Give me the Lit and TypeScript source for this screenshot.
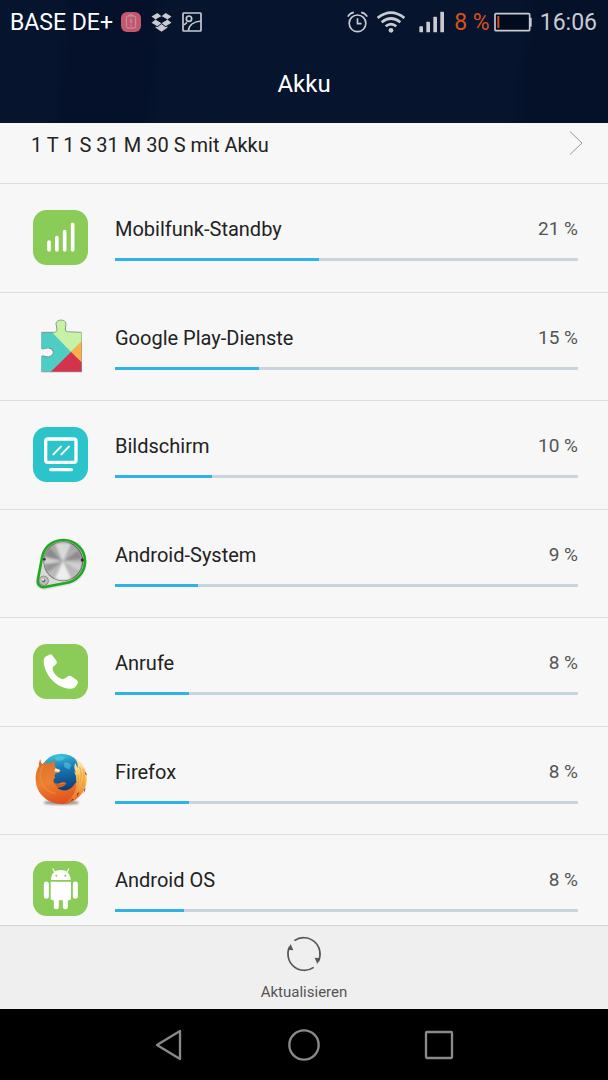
import { LitElement, html, svg, css } from "lit";
import type { TemplateResult } from "lit";
import { customElement, property } from "lit/decorators.js";

interface Consumer {
  name: string;
  percent: number;
  level: number;
  icon: TemplateResult;
}

const cellular = html`<svg viewBox="39 45 165 165" aria-hidden="true">
  <rect x="39" y="45" width="165" height="165" rx="41" fill="#8bcb57" />
  <path d="M87 141v24M110.500 128v37M134 110v55M158 88v77" stroke="#fff" stroke-width="11" stroke-linecap="round" />
</svg>`;

const puzzle = html`<svg viewBox="39 41 165 165" aria-hidden="true">
  <defs>
    <clipPath id="piece">
      <path d="M64 81H104Q112 79 111 71L108 57C106 40 140 40 138 57L136 71Q135 79 143 79L185 81V199H64V153C72 148 74 156 86 154C104 151 104 130 88 128C76 126 72 133 64 129Z" />
    </clipPath>
  </defs>
  <path d="M64 83H104Q112 81 111 73L108 59C106 42 140 42 138 59L136 73Q135 81 143 81L186 83V201H64V155C72 150 74 158 86 156C104 153 104 132 88 130C76 128 72 135 64 131Z" fill="#77807a" opacity=".8" />
  <g clip-path="url(#piece)">
    <path d="M60 78H98L153 140 92 200H60Z" fill="#4fcdc4" />
    <path d="M96 81V40H186V108L153 140Z" fill="#c5f2a5" />
    <path d="M153 140 186 107V172Z" fill="#fbb04d" />
    <path d="M92 200 153 140 186 172V200Z" fill="#d3344b" />
  </g>
  <path d="M64 81H104Q112 79 111 71L108 57C106 40 140 40 138 57L136 71Q135 79 143 79L185 81M64 153C72 148 74 156 86 154C104 151 104 130 88 128" fill="none" stroke="#5f7d6c" stroke-width="3" opacity=".65" />
</svg>`;

const display = html`<svg viewBox="39 36 165 165" aria-hidden="true">
  <rect x="39" y="36" width="165" height="165" rx="41" fill="#2cc4cb" />
  <rect x="77" y="72" width="91" height="70" rx="7" fill="none" stroke="#fff" stroke-width="10" />
  <path d="M92 164h62" stroke="#fff" stroke-width="10" stroke-linecap="round" />
  <path d="M100 118 123 95M124 118 147 95" stroke="#fff" stroke-width="6" stroke-linecap="round" />
</svg>`;

const wedge = (from: number, to: number, fill: string, opacity: number) => {
  const point = (deg: number) => {
    const t = (deg * Math.PI) / 180;
    return `${129 + 56 * Math.cos(t)} ${108 + 56 * Math.sin(t)}`;
  };
  return svg`<path d="M129 108L${point(from)}A56 56 0 0 1 ${point(to)}Z" fill=${fill} opacity=${opacity} />`;
};

const system = html`<svg viewBox="39 32 165 165" aria-hidden="true">
  <defs>
    <linearGradient id="steel" x1="0" y1="0" x2="0" y2="1">
      <stop offset="0" stop-color="#a4a4a4" />
      <stop offset=".5" stop-color="#b4b4b4" />
      <stop offset="1" stop-color="#bdbdbd" />
    </linearGradient>
    <filter id="soft"><feGaussianBlur stdDeviation="3" /></filter>
  </defs>
  <path d="M67 97C76 60 108 47 133 48C172 50 198 81 197 113C196 149 168 173 139 177L76 190C57 191 49 180 52 164Z" fill="#888" opacity=".6" filter="url(#soft)" />
  <path d="M67 93C76 56 108 43 133 44C172 46 196 77 195 109C194 145 166 169 137 173L74 185C59 187 51 177 54 161Z" fill="#dadada" stroke="#1cab1c" stroke-width="8" stroke-linejoin="round" />
  <circle cx="130" cy="108" r="60" fill="#6a6a6a" />
  <circle cx="129" cy="108" r="57" fill="url(#steel)" />
  <g filter="url(#soft)">
    ${wedge(-115, -65, "#fff", 0.55)}
    ${wedge(65, 115, "#fff", 0.75)}
    ${wedge(-35, -8, "#555", 0.4)}
    ${wedge(145, 172, "#555", 0.35)}
    ${wedge(-165, -135, "#555", 0.4)}
    ${wedge(5, 30, "#fff", 0.35)}
    ${wedge(172, 190, "#fff", 0.4)}
  </g>
  <circle cx="71" cy="166" r="15" fill="#777" />
  <circle cx="71" cy="166" r="13" fill="#bcbcbc" />
  <circle cx="71" cy="166" r="5" fill="#666" />
  <circle cx="69" cy="163" r="3" fill="#fff" />
  <circle cx="73" cy="102" r="4" fill="#333" />
  <circle cx="187" cy="104" r="5" fill="#333" />
</svg>`;

const phone = html`<svg viewBox="39 27 165 165" aria-hidden="true">
  <rect x="39" y="27" width="165" height="165" rx="41" fill="#8bcb57" />
  <path d="M75 66 87 59Q93 56 97 61L110 79Q112 84 108 88L98 97C96 111 111 129 129 133L138 128 145 123Q149 121 154 124L171 136Q176 140 173 146L166 156Q161 162 149 161C112 160 75 124 71 81Q70 71 75 66Z" fill="#fff" />
</svg>`;

const firefox = html`<svg viewBox="39 38 165 165" aria-hidden="true">
  <defs>
    <linearGradient id="globe" x1=".4" y1="0" x2=".55" y2="1">
      <stop offset="0" stop-color="#3cc5dd" />
      <stop offset=".35" stop-color="#1877b8" />
      <stop offset="1" stop-color="#0a2e63" />
    </linearGradient>
    <linearGradient id="fur" x1=".2" y1="0" x2=".5" y2="1">
      <stop offset="0" stop-color="#d9702e" />
      <stop offset=".5" stop-color="#ee8030" />
      <stop offset="1" stop-color="#df4f1d" />
    </linearGradient>
    <linearGradient id="tail" x1="0" y1="0" x2="0" y2="1">
      <stop offset="0" stop-color="#fff0bf" />
      <stop offset=".45" stop-color="#f9bf56" />
      <stop offset="1" stop-color="#e96524" />
    </linearGradient>
    <filter id="shade"><feGaussianBlur stdDeviation="3" /></filter>
  </defs>
  <ellipse cx="124" cy="187" rx="53" ry="7" fill="#555" opacity=".6" filter="url(#shade)" />
  <circle cx="124" cy="104" r="64" fill="url(#globe)" />
  <path d="M103 53Q119 45 138 50L128 60 112 62ZM132 67Q145 62 154 75L148 88 133 81Z" fill="#6bdce0" opacity=".45" />
  <path d="M61 57C62 64 63 68 67 71Q79 64 93 69Q97 63 106 61Q101 71 107 82L120 88Q123 92 118 96L106 100Q101 108 106 113C98 116 99 127 106 129C119 134 125 120 139 128C134 138 122 142 111 142C129 157 154 151 165 129L196 121C191 165 161 191 125 191C81 191 47 157 47 117Q46 94 57 77Q55 66 61 57Z" fill="url(#fur)" />
  <path d="M165 53C186 63 203 91 200 123C196 161 167 187 131 190C153 178 170 157 169 126Q170 106 162 93L168 97Q159 81 166 68L173 83Q175 69 165 53Z" fill="url(#tail)" />
  <path d="M179 80Q188 101 180 126M174 103Q180 132 163 158M189 85Q196 112 187 135" fill="none" stroke="#e9832c" stroke-width="4" opacity=".5" />
  <path d="M196 93l5 12-5-3M193 146l4-2-6 16M178 156l-8 15 2-12M162 176l-8 7 1-6" fill="#7b2c17" />
  <path d="M106 84 120 89 117 95 103 93Z" fill="#fff1d1" />
  <path d="M70 75Q57 94 62 118Q70 153 107 160" fill="none" stroke="#f5a04b" stroke-width="5" opacity=".35" />
  <path d="M101 127Q120 137 139 128Q132 138 113 141Z" fill="#c54b17" opacity=".65" />
</svg>`;

const android = html`<svg viewBox="39 34 165 165" aria-hidden="true">
  <rect x="39" y="34" width="165" height="165" rx="41" fill="#8bcb57" />
  <path d="M93 91C93 70 106 61 122 61S151 70 152 91ZM92 96H153V146Q153 152 147 152H98Q92 152 92 146Z" fill="#fff" />
  <path d="M79 103v37M166 103v37M109 150v21M136 150v21" stroke="#fff" stroke-width="15" stroke-linecap="round" />
  <path d="M104 67l-5-9M141 67l5-9" stroke="#fff" stroke-width="4" stroke-linecap="round" />
  <circle cx="109" cy="78" r="3" fill="#8bcb57" />
  <circle cx="136" cy="78" r="3" fill="#8bcb57" />
</svg>`;

const consumers: Consumer[] = [
  { name: "Mobilfunk-Standby", percent: 21, level: 44, icon: cellular },
  { name: "Google Play-Dienste", percent: 15, level: 31, icon: puzzle },
  { name: "Bildschirm", percent: 10, level: 21, icon: display },
  { name: "Android-System", percent: 9, level: 18, icon: system },
  { name: "Anrufe", percent: 8, level: 16, icon: phone },
  { name: "Firefox", percent: 8, level: 16, icon: firefox },
  { name: "Android OS", percent: 8, level: 15, icon: android },
];

@customElement("status-bar")
export class StatusBar extends LitElement {
  static styles = css`
    :host {
      display: flex;
      justify-content: space-between;
      align-items: center;
      height: 44px;
      padding: 0 11px 0 10px;
      font-size: 23px;
      color: #c9cbd0;
    }
    .group {
      display: flex;
      align-items: center;
    }
    .carrier {
      color: #fff;
      margin-right: 8px;
    }
    .notices {
      display: flex;
      align-items: center;
      gap: 10px;
    }
    .alarm {
      margin-right: 9px;
    }
    .wifi {
      margin-right: 14px;
    }
    .signal {
      margin-right: 10px;
    }
    .charge {
      color: #d9501e;
      margin-right: 4px;
    }
    .battery {
      margin-right: 8px;
    }
    svg {
      display: block;
    }
  `;

  render() {
    return html`
      <div class="group">
        <span class="carrier">BASE DE+</span>
        <span class="notices">
          <svg width="20" height="20" viewBox="0 0 60 60" aria-hidden="true">
            <rect width="60" height="60" rx="18" fill="#c4566d" />
            <path d="M25 12V8h10v4M21 12h18q5 0 5 5v26q0 5-5 5H21q-5 0-5-5V17q0-5 5-5Z" fill="none" stroke="#c79aa6" stroke-width="3" />
            <path d="M30 20v14M30 38v4" stroke="#c79aa6" stroke-width="4" />
          </svg>
          <svg width="21" height="20" viewBox="0 0 60 58" aria-hidden="true">
            <path d="M18 3 30 12 13 22 1 13ZM42 3 59 13 47 22 30 12ZM13 22 30 32 18 41 1 31ZM47 22 59 31 42 41 30 32Z" fill="#c9cbd0" />
            <path d="M13 22 30 12 47 22 30 32Z" fill="#06122c" />
            <path d="M13 41 18 44 30 35 42 44 47 41V46L30 57 13 46Z" fill="#c9cbd0" />
          </svg>
          <svg width="20" height="20" viewBox="0 0 60 60" fill="none" stroke="#c9cbd0" stroke-width="5" aria-hidden="true">
            <rect x="3" y="3" width="54" height="54" rx="2" />
            <circle cx="21" cy="20" r="8" />
            <path d="M15 31 6 39M19 56C21 39 36 28 58 27" />
          </svg>
        </span>
      </div>
      <div class="group">
        <svg class="alarm" width="21" height="22" viewBox="0 0 62 66" fill="none" stroke="#c9cbd0" stroke-width="5" aria-hidden="true">
          <circle cx="31" cy="37" r="25" />
          <path d="M31 22v16h12" />
          <path d="M2 17Q8 6 20 4M60 17Q54 6 42 4" />
        </svg>
        <svg class="wifi" width="28" height="22" viewBox="0 0 84 66" fill="none" stroke="#c9cbd0" stroke-width="8" aria-hidden="true">
          <path d="M2 21Q42-11 82 21M14 34Q42 11 70 34M26 46Q42 33 58 46" />
          <circle cx="42" cy="58" r="7" fill="#c9cbd0" stroke="none" />
        </svg>
        <svg class="signal" width="25" height="22" viewBox="0 0 75 66" fill="#c9cbd0" aria-hidden="true">
          <rect x="1" y="46" width="11" height="18" rx="2" />
          <rect x="22" y="32" width="11" height="32" rx="2" />
          <rect x="43" y="17" width="11" height="47" rx="2" />
          <rect x="64" y="2" width="11" height="62" rx="2" />
        </svg>
        <span class="charge">8 %</span>
        <svg class="battery" width="38" height="20" viewBox="0 0 114 60" aria-hidden="true">
          <rect x="3" y="5" width="104" height="51" rx="3" fill="#020a1e" stroke="#c9cbd0" stroke-width="5" />
          <rect x="108" y="17" width="5" height="27" rx="1" fill="#c9cbd0" />
          <rect x="10" y="12" width="6" height="36" fill="#d9501e" />
        </svg>
        <time>16:06</time>
      </div>
    `;
  }
}

@customElement("usage-row")
export class UsageRow extends LitElement {
  @property({ attribute: false }) item!: Consumer;

  static styles = css`
    :host {
      display: flex;
      gap: 27px;
      padding: 26px 30px 0 33px;
    }
    .icon {
      flex: none;
      width: 55px;
      height: 55px;
    }
    .icon svg {
      display: block;
      width: 100%;
      height: 100%;
      overflow: visible;
    }
    .body {
      flex: 1;
      padding-top: 5px;
    }
    .line {
      display: flex;
      justify-content: space-between;
      align-items: center;
      line-height: 28px;
    }
    .name {
      font-size: 20px;
      color: #222;
    }
    .percent {
      font-size: 19px;
      color: #555;
    }
    .meter {
      display: block;
      appearance: none;
      width: 100%;
      height: 3px;
      margin-top: 15px;
      border: 0;
      background: #c9d5dd;
    }
    .meter::-webkit-progress-bar {
      background: #c9d5dd;
    }
    .meter::-webkit-progress-value {
      background: #2fb2e6;
    }
  `;

  render() {
    const { name, percent, level, icon } = this.item;
    return html`
      <div class="icon">${icon}</div>
      <div class="body">
        <div class="line">
          <label class="name" for="meter">${name}</label>
          <span class="percent">${percent} %</span>
        </div>
        <progress class="meter" id="meter" max="100" value=${level}></progress>
      </div>
    `;
  }
}

@customElement("app-root")
export class AppRoot extends LitElement {
  static styles = css`
    :host {
      display: flex;
      flex-direction: column;
      height: 100vh;
      overflow: hidden;
      font-family: Roboto, "Noto Sans", sans-serif;
      background: #f7f7f7;
      color: #222;
    }
    .top {
      flex: none;
      background: linear-gradient(95deg, #06142e 10%, #05112a 12% 25%, #06142e 27% 84%, #051129 87%);
    }
    .title {
      margin: 0;
      padding: 26px 0 25px;
      font-size: 24px;
      line-height: 28px;
      font-weight: 400;
      text-align: center;
      color: #fff;
    }
    .content {
      flex: 1;
      min-height: 0;
      overflow-y: auto;
      scrollbar-width: none;
    }
    .history {
      display: flex;
      justify-content: space-between;
      box-sizing: border-box;
      height: 61px;
      padding: 8px 25px 0 31px;
      border-bottom: 1px solid #dedede;
      font-size: 20px;
      line-height: 28px;
      color: inherit;
      text-decoration: none;
    }
    .list {
      display: grid;
      grid-template-rows: repeat(7, 1fr);
      height: 760px;
      margin: 0;
      padding: 0;
      list-style: none;
    }
    .entry {
      border-bottom: 1px solid #dedede;
    }
    .toolbar {
      flex: none;
      display: flex;
      justify-content: center;
      border-top: 1px solid #d6d6d6;
      background: #efefef;
    }
    .refresh {
      display: flex;
      flex-direction: column;
      align-items: center;
      gap: 10px;
      padding: 10px 20px 7px;
      border: 0;
      background: none;
      font: inherit;
      font-size: 15px;
      line-height: 20px;
      color: #555;
    }
    .keys {
      flex: none;
      display: flex;
      justify-content: center;
      gap: 99px;
      padding: 18px 0 17px;
      background: #000;
    }
    .key {
      padding: 0;
      border: 0;
      background: none;
    }
    .refresh svg,
    .key svg {
      display: block;
    }
  `;

  render() {
    return html`
      <header class="top">
        <status-bar></status-bar>
        <h1 class="title">Akku</h1>
      </header>
      <main class="content">
        <a class="history" href="#verlauf">
          <span>1 T 1 S 31 M 30 S mit Akku</span>
          <svg width="14" height="24" viewBox="0 0 14 24" fill="none" stroke="#999" aria-hidden="true">
            <path d="M1 0.500 13 12 1 23.500" />
          </svg>
        </a>
        <ul class="list">
          ${consumers.map((item) => html`<li class="entry"><usage-row .item=${item}></usage-row></li>`)}
        </ul>
      </main>
      <footer class="toolbar">
        <button class="refresh" type="button">
          <svg width="36" height="36" viewBox="0 0 108 108" fill="none" stroke="#555759" stroke-width="5" aria-hidden="true">
            <path d="M25 14A49 49 0 0 1 97 76M83 94A49 49 0 0 1 11 32" />
            <path d="M14 24 22 43 5 41ZM94 84 86 65 103 67Z" fill="#555759" stroke="none" />
          </svg>
          Aktualisieren
        </button>
      </footer>
      <nav class="keys" aria-label="Navigation">
        <button class="key" type="button" aria-label="Zurück">
          <svg width="36" height="36" viewBox="0 0 108 108" fill="none" stroke="#8a8a8a" stroke-width="7" stroke-linejoin="round" aria-hidden="true">
            <path d="M18 54 87 12V96Z" />
          </svg>
        </button>
        <button class="key" type="button" aria-label="Startseite">
          <svg width="36" height="36" viewBox="0 0 108 108" fill="none" stroke="#8a8a8a" stroke-width="7" aria-hidden="true">
            <circle cx="54" cy="54" r="44" />
          </svg>
        </button>
        <button class="key" type="button" aria-label="Übersicht">
          <svg width="36" height="36" viewBox="0 0 108 108" fill="none" stroke="#8a8a8a" stroke-width="7" aria-hidden="true">
            <rect x="15" y="15" width="78" height="78" rx="3" />
          </svg>
        </button>
      </nav>
    `;
  }
}
